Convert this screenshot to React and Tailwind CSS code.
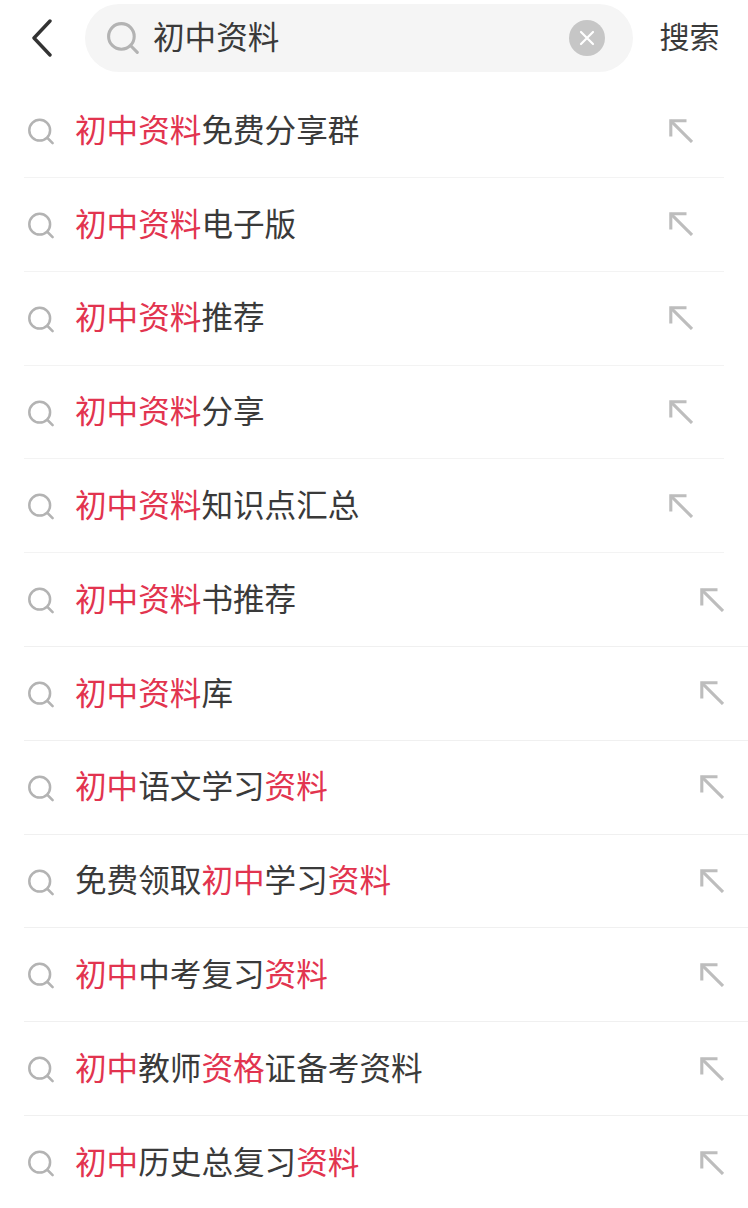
const R = ({ children }) => <span className="text-[#e2344f]">{children}</span>;

const rows = [
  { near: true, t: <><R>初中资料</R>免费分享群</> },
  { near: true, t: <><R>初中资料</R>电子版</> },
  { near: true, t: <><R>初中资料</R>推荐</> },
  { near: true, t: <><R>初中资料</R>分享</> },
  { near: true, t: <><R>初中资料</R>知识点汇总</> },
  { t: <><R>初中资料</R>书推荐</> },
  { t: <><R>初中资料</R>库</> },
  { t: <><R>初中</R>语文学习<R>资料</R></> },
  { t: <>免费领取<R>初中</R>学习<R>资料</R></> },
  { t: <><R>初中</R>中考复习<R>资料</R></> },
  { t: <><R>初中</R>教师<R>资格</R>证备考资料</> },
  { t: <><R>初中</R>历史总复习<R>资料</R></> },
];

const SearchIcon = ({ className }) => (
  <svg viewBox="0 0 28 28" fill="none" stroke="#b3b3b3" strokeWidth="2.7" strokeLinecap="round" className={className}>
    <circle cx="12.6" cy="12.6" r="11.2" />
    <path d="M21 21 L26.5 26.5" />
  </svg>
);

const Arrow = ({ className }) => (
  <svg viewBox="0 0 24 24" fill="none" stroke="#bdbdbd" strokeWidth="3.1" className={className}>
    <path d="M1.8 17.5 V1.8 H17.5" />
    <path d="M1.8 1.8 L23 23" />
  </svg>
);

export default function App() {
  return (
    <div className="w-[748px] h-[1208px] bg-white overflow-hidden text-[#3a3a3a] font-['Noto_Sans_CJK_SC','Noto_Sans',sans-serif]">
      <header className="flex items-center h-[68px] mt-1 pl-8">
        <svg viewBox="0 0 20 38" fill="none" stroke="#333333" strokeWidth="3.4" strokeLinecap="round" strokeLinejoin="round" className="w-5 h-[38px] shrink-0">
          <path d="M18 2 L2 19 L18 36" />
        </svg>
        <div className="ml-[33px] w-[548px] h-[68px] rounded-full bg-[#f5f5f5] flex items-center pl-[22px] pr-[28px] shrink-0">
          <SearchIcon className="w-8 h-8 shrink-0" />
          <span className="ml-[14px] pb-1 text-[31.6px] leading-none flex-1">初中资料</span>
          <div className="w-9 h-9 rounded-full bg-[#c6c6c6] flex items-center justify-center">
            <svg viewBox="0 0 16 16" fill="none" stroke="#ffffff" strokeWidth="2.2" strokeLinecap="round" className="w-4 h-4">
              <path d="M2 2 L14 14 M14 2 L2 14" />
            </svg>
          </div>
        </div>
        <span className="ml-[26.5px] pb-[6px] text-[30px] leading-none whitespace-nowrap">搜索</span>
      </header>
      <ul className="mt-[12.3px] ml-6 w-[724px]">
        {rows.map((r, i) => (
          <li key={i} className={r.near ? "h-[93.8px] mr-6 flex items-center border-b border-[#f3f3f3] pl-1" : "h-[93.8px] pr-6 flex items-center border-b border-[#f0f0f0] last:border-b-0 pl-1"}>
            <SearchIcon className="w-[26px] h-[27px] mt-[2px] shrink-0" />
            <span className="ml-[21px] pb-1 text-[31.6px] leading-none flex-1 whitespace-nowrap">{r.t}</span>
            <Arrow className={r.near ? "w-6 h-6 shrink-0 mr-[31px]" : "w-6 h-6 shrink-0"} />
          </li>
        ))}
      </ul>
    </div>
  );
}
